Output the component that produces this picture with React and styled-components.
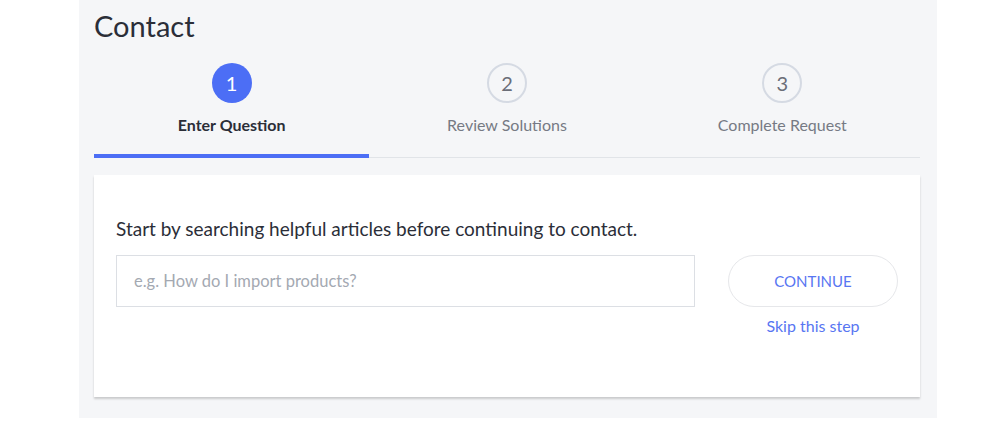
import styled, { createGlobalStyle } from "styled-components";

const Global = createGlobalStyle`
  body {
    margin: 0;
    background: #ffffff;
    font-family: "Lato", "Noto Sans", sans-serif;
  }
`;

const Page = styled.div`
  width: 858px;
  margin-left: 79px;
  height: 418px;
  box-sizing: border-box;
  padding: 8px 17px 0 15px;
  background: #f5f6f8;
`;

const Title = styled.h1`
  margin: 0;
  font-size: 29px;
  font-weight: 400;
  color: #2b2e38;
  line-height: 36px;
`;

const Steps = styled.div`
  display: grid;
  grid-template-columns: repeat(3, 1fr);
  margin-top: 19px;
  border-bottom: 1px solid #e1e4e8;
`;

const Step = styled.div`
  display: flex;
  flex-direction: column;
  align-items: center;
  padding-bottom: 20px;
  margin-bottom: -1px;
  border-bottom: 4px solid ${(p) => (p.active ? "#4c6ef5" : "transparent")};
`;

const Circle = styled.div`
  width: 40px;
  height: 40px;
  box-sizing: border-box;
  border-radius: 50%;
  display: flex;
  align-items: center;
  justify-content: center;
  font-size: 20px;
  background: ${(p) => (p.active ? "#4c6ef5" : "transparent")};
  color: ${(p) => (p.active ? "#ffffff" : "#6b6e78")};
  border: ${(p) => (p.active ? "none" : "2px solid #d5dae3")};
`;

const StepLabel = styled.div`
  margin-top: 12px;
  font-size: 16px;
  font-weight: ${(p) => (p.active ? 700 : 400)};
  color: ${(p) => (p.active ? "#2b2e38" : "#767a84")};
`;

const Card = styled.div`
  margin-top: 17px;
  background: #ffffff;
  height: 222px;
  box-sizing: border-box;
  padding: 42px 22px 0 22px;
  box-shadow: 0 2px 2px rgba(0, 0, 0, 0.18);
`;

const Prompt = styled.p`
  margin: 0;
  font-size: 19px;
  color: #2b2e38;
  line-height: 24px;
`;

const Row = styled.div`
  display: flex;
  align-items: flex-start;
  margin-top: 14px;
  gap: 33px;
`;

const Input = styled.input`
  width: 579px;
  height: 52px;
  box-sizing: border-box;
  border: 1px solid #dcdfe4;
  padding: 0 17px;
  font-family: inherit;
  font-size: 16.5px;
  color: #2b2e38;
  outline: none;
  &::placeholder {
    color: #a4a9b2;
  }
`;

const Actions = styled.div`
  display: flex;
  flex-direction: column;
  align-items: center;
  gap: 9px;
`;

const Button = styled.button`
  width: 170px;
  height: 52px;
  border-radius: 26px;
  border: 1px solid #e6e7ea;
  background: #ffffff;
  color: #5876f2;
  font-family: inherit;
  font-size: 15px;
`;

const Skip = styled.a`
  color: #5876f2;
  font-size: 16px;
  text-decoration: none;
`;

const steps = ["Enter Question", "Review Solutions", "Complete Request"];

export default function App() {
  return (
    <>
      <Global />
      <Page>
        <Title>Contact</Title>
        <Steps>
          {steps.map((s, i) => (
            <Step key={s} active={i === 0}>
              <Circle active={i === 0}>{i + 1}</Circle>
              <StepLabel active={i === 0}>{s}</StepLabel>
            </Step>
          ))}
        </Steps>
        <Card>
          <Prompt>Start by searching helpful articles before continuing to contact.</Prompt>
          <Row>
            <Input placeholder="e.g. How do I import products?" />
            <Actions>
              <Button>CONTINUE</Button>
              <Skip href="#">Skip this step</Skip>
            </Actions>
          </Row>
        </Card>
      </Page>
    </>
  );
}
